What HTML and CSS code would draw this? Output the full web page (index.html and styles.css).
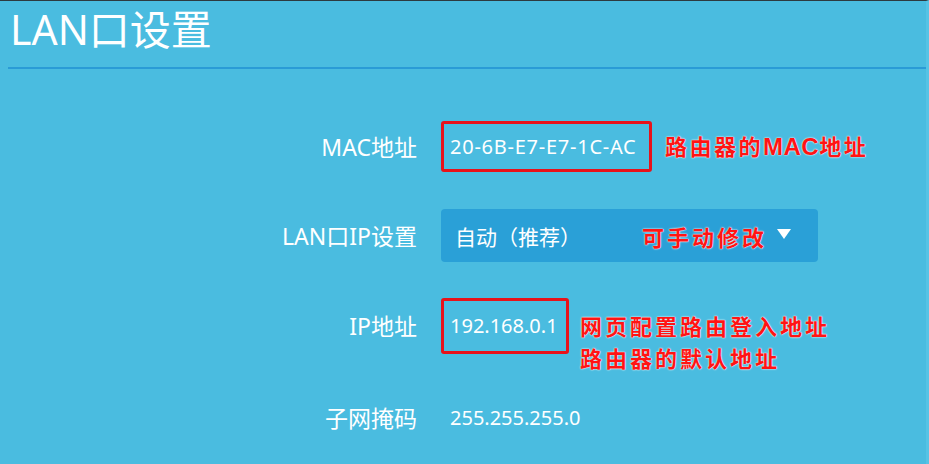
FILE: index.html
```html
<!DOCTYPE html>
<html lang="zh-CN">
<head>
<meta charset="utf-8">
<title>LAN口设置</title>
<link rel="stylesheet" href="styles.css">
</head>
<body>
<div class="page">
  <h1 class="title">LAN口设置</h1>
  <div class="form">
    <div class="row row-mac">
      <div class="label">MAC地址</div>
      <div class="field">
        <div class="box box-mac"><span class="value value-mac">20-6B-E7-E7-1C-AC</span></div>
        <span class="note note-mac">路由器的<b class="latin">MAC</b>地址</span>
      </div>
    </div>
    <div class="row row-lan">
      <div class="label">LAN口IP设置</div>
      <div class="field">
        <div class="select">
          <span class="select-text">自动（推荐）</span>
          <span class="note note-select">可手动修改</span>
          <span class="caret"></span>
        </div>
      </div>
    </div>
    <div class="row row-ip">
      <div class="label">IP地址</div>
      <div class="field">
        <div class="box box-ip"><span class="value">192.168.0.1</span></div>
        <div class="note note-ip">
          <div>网页配置路由登入地址</div>
          <div>路由器的默认地址</div>
        </div>
      </div>
    </div>
    <div class="row row-mask">
      <div class="label">子网掩码</div>
      <div class="field">
        <span class="value value-plain">255.255.255.0</span>
      </div>
    </div>
  </div>
</div>
</body>
</html>
```

FILE: styles.css
```css
* { box-sizing: border-box; }

html, body {
  margin: 0;
  padding: 0;
}

body {
  width: 929px;
  height: 464px;
  overflow: hidden;
  background: #4abce0;
  font-family: "Noto Sans", "Noto Sans CJK SC", sans-serif;
  color: #ffffff;
}

.page {
  height: 464px;
  border-top: 1px solid #2d3a40;
  border-right: 3px solid #56c3e5;
}

.title {
  margin: 0;
  padding: 0 0 10px 10px;
  font-size: 41px;
  line-height: 56px;
  font-weight: 400;
  color: #ffffff;
}

.form {
  margin-left: 8px;
  border-top: 2px solid #2a9bd6;
  padding-top: 52px;
  display: flex;
  flex-direction: column;
  gap: 37px;
}

.row {
  display: grid;
  grid-template-columns: 409px 1fr;
  grid-template-rows: 100%;
  column-gap: 24px;
  align-items: center;
}

.row-mac { height: 51px; }
.row-lan { height: 53px; }
.row-ip { height: 56px; margin-top: -1px; }
.row-mask { height: 50px; margin-top: 2px; }

.label {
  text-align: right;
  font-size: 23px;
  line-height: 30px;
  color: #ffffff;
}

.field {
  display: flex;
  align-items: center;
  height: 100%;
  min-height: 0;
}

.value {
  font-size: 20px;
  line-height: 28px;
  color: #ffffff;
}

.value-mac {
  letter-spacing: 0.75px;
}

.value-plain {
  padding-left: 9px;
}

.box {
  height: 100%;
  display: flex;
  align-items: center;
  border: 3px solid #e8121a;
  border-radius: 3px;
  flex-shrink: 0;
}

.box-mac {
  width: 211px;
  padding-left: 6px;
}

.box-ip {
  width: 128px;
  padding-left: 6px;
}

.note {
  font-family: "Noto Sans CJK SC", sans-serif;
  font-weight: 700;
  font-size: 22px;
  letter-spacing: 2px;
  color: #ff1414;
  text-shadow: 0 0 1px #ffffff, 0 0 2px #ffffff;
}

.note .latin {
  font-family: "Liberation Sans", sans-serif;
  font-weight: 700;
  font-size: 24px;
  letter-spacing: 0.5px;
}

.note-mac {
  margin-left: 13px;
  line-height: 30px;
  margin-top: -2px;
  letter-spacing: 2.5px;
}

.note-ip {
  align-self: flex-start;
  margin-left: 11px;
  line-height: 32px;
  margin-top: 11px;
  letter-spacing: 3px;
  white-space: nowrap;
}

.select {
  width: 377px;
  height: 100%;
  background: #2aa0d7;
  border-radius: 4px;
  display: flex;
  align-items: center;
  padding-left: 14px;
}

.select-text {
  font-family: "Noto Sans CJK SC", sans-serif;
  font-size: 21px;
  line-height: 30px;
  color: #ffffff;
  width: 187px;
}

.note-select {
  line-height: 30px;
  letter-spacing: 3px;
}

.caret {
  margin-left: 10px;
  width: 0;
  height: 0;
  border-left: 7px solid transparent;
  border-right: 7px solid transparent;
  border-top: 10px solid #ffffff;
  margin-top: -3px;
}
```
